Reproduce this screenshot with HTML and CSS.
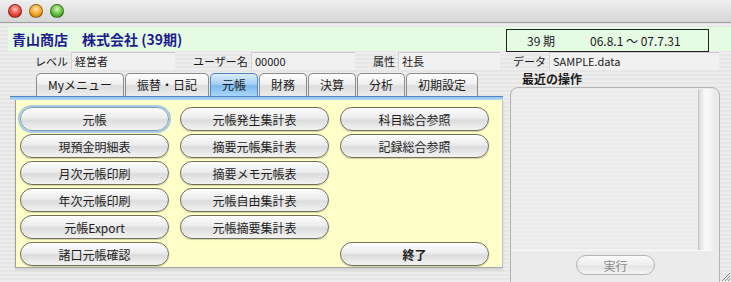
FILE: index.html
```html
<!DOCTYPE html>
<html lang="ja">
<head>
    <meta charset="UTF-8">
    <meta name="viewport" content="width=device-width, initial-scale=1.0">
    <title>元帳</title>
    <link rel="stylesheet" href="styles.css">
</head>
<body>
    <div class="window">
        <div class="titlebar">
            <span class="light red"></span>
            <span class="light orange"></span>
            <span class="light green"></span>
        </div>

        <div class="content">
            <div class="company">
                <h1>青山商店　株式会社 (39期)</h1>
                <div class="period">
                    <span class="period-no">39 期</span>
                    <span>06.8.1 ～ 07.7.31</span>
                </div>
            </div>

            <div class="info">
                <div class="info-item level"><label>レベル</label><span class="field">経営者</span></div>
                <div class="info-item user"><label>ユーザー名</label><span class="field">00000</span></div>
                <div class="info-item attr"><label>属性</label><span class="field">社長</span></div>
                <div class="info-item data"><label>データ</label><span class="field">SAMPLE.data</span></div>
            </div>

            <div class="main">
                <div class="left">
                    <div class="tabs">
                        <div class="tab">Myメニュー</div>
                        <div class="tab">振替・日記</div>
                        <div class="tab active">元帳</div>
                        <div class="tab">財務</div>
                        <div class="tab">決算</div>
                        <div class="tab">分析</div>
                        <div class="tab">初期設定</div>
                    </div>
                    <div class="tabline"></div>
                    <div class="pane">
                        <button class="btn focus">元帳</button>
                        <button class="btn">現預金明細表</button>
                        <button class="btn">月次元帳印刷</button>
                        <button class="btn">年次元帳印刷</button>
                        <button class="btn">元帳Export</button>
                        <button class="btn">諸口元帳確認</button>

                        <button class="btn">元帳発生集計表</button>
                        <button class="btn">摘要元帳集計表</button>
                        <button class="btn">摘要メモ元帳表</button>
                        <button class="btn">元帳自由集計表</button>
                        <button class="btn">元帳摘要集計表</button>
                        <div class="empty"></div>

                        <button class="btn">科目総合参照</button>
                        <button class="btn">記録総合参照</button>
                        <button class="btn quit">終了</button>
                    </div>
                </div>

                <div class="right">
                    <div class="recent-title">最近の操作</div>
                    <div class="recent-box">
                        <div class="recent-list">
                            <div class="list-area"></div>
                            <div class="scroll"></div>
                        </div>
                        <button class="run" disabled>実行</button>
                    </div>
                </div>
            </div>
        </div>

        <svg class="grip" width="11" height="11" viewBox="0 0 11 11">
            <path d="M10 2 L2 10 M10 5 L5 10 M10 8 L8 10" stroke="#8a8a8a" stroke-width="1" fill="none"/>
        </svg>
    </div>
</body>
</html>
```

FILE: styles.css
```css
* {
    margin: 0;
    padding: 0;
    box-sizing: border-box;
}

body {
    width: 731px;
    height: 282px;
    overflow: hidden;
    font-family: "Noto Sans CJK JP", "Noto Sans", sans-serif;
    font-size: 12px;
    color: #1a1a1a;
    background: #e8e8e8;
}

.window {
    position: relative;
    height: 282px;
    background: repeating-linear-gradient(#ededed 0 2px, #e6e6e6 2px 4px);
}

/* title bar */
.titlebar {
    height: 23px;
    display: flex;
    align-items: center;
    gap: 7px;
    padding-left: 8px;
    background: linear-gradient(#efefef, #d6d6d6);
    border-bottom: 1px solid #9c9c9c;
}

.light {
    width: 14px;
    height: 14px;
    border-radius: 50%;
    border: 1px solid rgba(0, 0, 0, 0.35);
}

.red {
    background: radial-gradient(circle at 50% 35%, #ffc2bb 0, #e8473c 55%, #a81e16 100%);
}

.orange {
    background: radial-gradient(circle at 50% 35%, #ffe3a8 0, #f2a623 55%, #b06a0c 100%);
}

.green {
    background: radial-gradient(circle at 50% 35%, #d4f5b4 0, #5fbf3a 55%, #2f7d1c 100%);
}

.content {
    padding: 4px 0 0 8px;
}

/* company header */
.company {
    height: 24px;
    display: flex;
    align-items: flex-start;
    justify-content: space-between;
    padding-left: 4px;
    background: #e6fbe4;
}

.company h1 {
    font-size: 14px;
    font-weight: bold;
    line-height: 24px;
    color: #1c1c8c;
}

.period {
    width: 203px;
    height: 23px;
    margin: 2px 22px 0 0;
    display: flex;
    align-items: center;
    padding-left: 20px;
    border: 1px solid #222;
    background: #e6fbe4;
    font-size: 12px;
    white-space: nowrap;
}

.period-no {
    width: 63px;
}

/* info row */
.info {
    height: 18px;
    margin-top: 1px;
    display: flex;
    padding-left: 27px;
    font-size: 11px;
    white-space: nowrap;
}

.info-item {
    display: flex;
    align-items: center;
}

.info-item label {
    flex: none;
}

.field {
    height: 18px;
    line-height: 17px;
    padding-left: 3px;
    background: #f1f1f1;
    border-top: 1px solid #c9c9c9;
    border-left: 1px solid #d3d3d3;
}

.level label { width: 36px; }
.level .field { width: 104px; }

.user { margin-left: 18px; }
.user label { width: 58px; }
.user .field { width: 104px; }

.attr { margin-left: 18px; }
.attr label { width: 25px; }
.attr .field { width: 102px; }

.data { margin-left: 13px; }
.data label { width: 36px; }
.data .field { width: 170px; }

/* main area */
.main {
    display: flex;
    gap: 7px;
    padding-left: 2px;
}

.left {
    width: 493px;
}

.tabs {
    height: 23px;
    margin-top: 3px;
    display: flex;
    gap: 1px;
    padding-left: 26px;
}

.tab {
    padding: 0 11px;
    line-height: 22px;
    border: 1px solid #8c8c8c;
    border-bottom: none;
    border-radius: 5px 5px 0 0;
    background: linear-gradient(#fefefe, #f0f0f0 45%, #dedede 55%, #ececec);
    white-space: nowrap;
}

.tab.active {
    border-color: #4f86c0;
    background: linear-gradient(#d8edfc, #a6d1f5 45%, #7cbbef 55%, #a9d6f8);
}

.tabline {
    height: 4px;
    border-top: 1px solid #4f86c0;
    background: linear-gradient(#8cc2ef, #b9dbf7);
}

.pane {
    width: 488px;
    height: 168px;
    margin-left: 5px;
    padding: 7px 0 0 4px;
    display: grid;
    grid-template-columns: repeat(3, 149px);
    grid-template-rows: repeat(6, 24px);
    grid-auto-flow: column;
    column-gap: 11px;
    row-gap: 3px;
    background: #ffffca;
    border-left: 1px solid #a0a0a0;
    border-right: 1px solid #c4c4c4;
    border-bottom: 1px solid #a8a8a8;
    box-shadow: 0 2px 2px rgba(0, 0, 0, 0.12);
}

.btn {
    font-family: inherit;
    font-size: 12px;
    color: #1e1e1e;
    border: 1px solid #6f6f55;
    border-radius: 12px;
    background: linear-gradient(#fdfdfd, #ececec 45%, #dcdcdc 55%, #f3f3f3);
    box-shadow: inset 0 1px 1px #fff, 0 1px 1px rgba(0, 0, 0, 0.18);
}

.btn.focus {
    border-color: #7b9ab5;
    box-shadow: 0 0 0 2px #a9cbe6, inset 0 1px 1px #fff;
}

.btn.quit {
    grid-column: 3;
    grid-row: 6;
    font-weight: bold;
}

/* recent operations */
.right {
    width: 210px;
}

.recent-title {
    height: 17px;
    line-height: 17px;
    padding-left: 12px;
    font-weight: bold;
}

.recent-box {
    height: 196px;
    padding: 1px 0 0 1px;
    border: 1px solid #b3b3b3;
    border-radius: 8px 8px 0 0;
    background: #ebebeb;
}

.recent-list {
    height: 162px;
    margin-right: 6px;
    display: flex;
    border-radius: 7px 0 0 0;
    overflow: hidden;
    border-bottom: 1px solid #f8f8f8;
}

.list-area {
    flex: 1;
    background: repeating-linear-gradient(#f0f0f0 0 2px, #ebebeb 2px 4px);
}

.scroll {
    width: 15px;
    border-left: 1px solid #c6c6c6;
    background: linear-gradient(90deg, #dcdcdc, #fbfbfb 45%, #f2f2f2);
}

.run {
    display: block;
    width: 79px;
    height: 20px;
    margin: 4px auto 0;
    font-family: inherit;
    font-size: 12px;
    color: #8a8a8a;
    border: 1px solid #b4b4b4;
    border-radius: 10px;
    background: linear-gradient(#fafafa, #eeeeee 50%, #e4e4e4 55%, #f4f4f4);
}

.grip {
    position: absolute;
    right: 0;
    bottom: 0;
}
```
